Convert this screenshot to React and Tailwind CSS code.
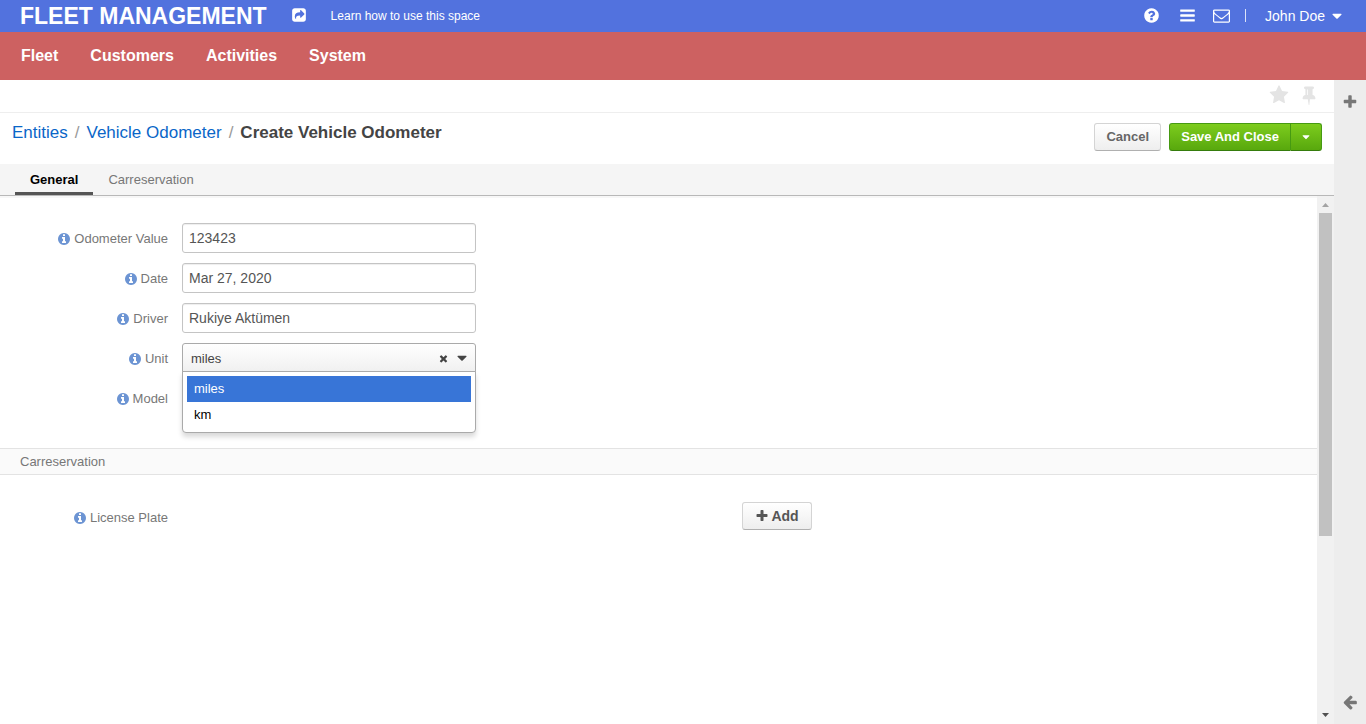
import { useState } from "react";

const ICONS = {
  info: "M1152 1376v-160q0-14-9-23t-23-9h-96v-512q0-14-9-23t-23-9h-320q-14 0-23 9t-9 23v160q0 14 9 23t23 9h96v320h-96q-14 0-23 9t-9 23v160q0 14 9 23t23 9h448q14 0 23-9t9-23zm-128-896v-160q0-14-9-23t-23-9h-192q-14 0-23 9t-9 23v160q0 14 9 23t23 9h192q14 0 23-9t9-23zm640 416q0 209-103 385.5t-279.5 279.5-385.5 103-385.5-103-279.5-279.5-103-385.5 103-385.5 279.5-279.5 385.5-103 385.5 103 279.5 279.5 103 385.5z",
  question:
    "M1024 1376v-192q0-14-9-23t-23-9h-192q-14 0-23 9t-9 23v192q0 14 9 23t23 9h192q14 0 23-9t9-23zm256-672q0-88-55.5-163t-138.5-116-170-41q-243 0-371 213-15 24 8 42l132 100q7 6 19 6 16 0 25-12 53-68 86-92 34-24 86-24 48 0 85.5 26t37.5 59q0 38-20 61t-68 45q-63 28-115.5 86.5t-52.5 125.5v36q0 14 9 23t23 9h192q14 0 23-9t9-23q0-19 21.5-49.5t54.5-49.5q32-18 49-28.5t46-35 44.5-48 28-60.5 12.5-81zm384 192q0 209-103 385.5t-279.5 279.5-385.5 103-385.5-103-279.5-279.5-103-385.5 103-385.5 279.5-279.5 385.5-103 385.5 103 279.5 279.5 103 385.5z",
  bars: "M1664 1344v128q0 26-19 45t-45 19h-1408q-26 0-45-19t-19-45v-128q0-26 19-45t45-19h1408q26 0 45 19t19 45zm0-512v128q0 26-19 45t-45 19h-1408q-26 0-45-19t-19-45v-128q0-26 19-45t45-19h1408q26 0 45 19t19 45zm0-512v128q0 26-19 45t-45 19h-1408q-26 0-45-19t-19-45v-128q0-26 19-45t45-19h1408q26 0 45 19t19 45z",
  envelope:
    "M1664 1504v-768q-32 36-69 66-268 206-426 338-51 43-83 67t-86.5 48.5-102.5 24.5h-2q-48 0-102.5-24.5t-86.5-48.5-83-67q-158-132-426-338-37-30-69-66v768q0 13 9.5 22.5t22.5 9.5h1472q13 0 22.5-9.5t9.5-22.5zm0-1051v-24.5l-.5-13-3-12.5-5.5-9-9-7.5-14-2.5h-1472q-13 0-22.5 9.5t-9.5 22.5q0 168 147 284 193 152 401 317 6 5 35 29.5t46 37.5 44.5 31.5 50.5 27.5 43 9h2q20 0 43-9t50.5-27.5 44.5-31.5 46-37.5 35-29.5q208-165 401-317 54-43 100.5-115.5t46.5-131.5zm128-37v1088q0 66-47 113t-113 47h-1472q-66 0-113-47t-47-113v-1088q0-66 47-113t113-47h1472q66 0 113 47t47 113z",
  share:
    "M416 128h960q119 0 203.500 84.500t84.500 203.500v960q0 119-84.500 203.500t-203.500 84.500h-960q-119 0-203.500-84.500t-84.500-203.500v-960q0-119 84.500-203.500t203.500-84.500zM1024 400v176q-300 0-450 120t-150 360q0 130 92 272q14 22 36 14q22-10 18-36q-30-170 44-248q90-98 410-98v176q0 42 40 58q38 16 70-14l352-352q38-38 0-90l-352-384q-32-30-70-14t-40 60z",
  star: "M1728 647q0 22-26 48l-363 354 86 500q1 7 1 20 0 21-10.500 35.500t-30.500 14.500q-19 0-40-12l-449-236-449 236q-22 12-40 12-21 0-31.500-14.500t-10.500-35.500q0-6 2-20l86-500-364-354q-25-27-25-48 0-37 56-46l502-73 225-455q19-41 49-41t49 41l225 455 502 73q56 9 56 46z",
  pin: "M800 864v-448q0-14-9-23t-23-9-23 9-9 23v448q0 14 9 23t23 9 23-9 9-23zm672 352q0 26-19 45t-45 19h-429l-51 483q-2 12-10.500 20.500t-20.500 8.500h-1q-27 0-32-27l-76-485h-404q-26 0-45-19t-19-45q0-123 78.500-221.500t177.500-98.500v-512q-52 0-90-38t-38-90 38-90 90-38h640q52 0 90 38t38 90-38 90-90 38v512q99 0 177.500 98.500t78.500 221.500z",
  plus: "M1600 736v192q0 40-28 68t-68 28h-416v416q0 40-28 68t-68 28h-192q-40 0-68-28t-28-68v-416h-416q-40 0-68-28t-28-68v-192q0-40 28-68t68-28h416v-416q0-40 28-68t68-28h192q40 0 68 28t28 68v416h416q40 0 68 28t28 68z",
  arrowLeft:
    "M1664 896v128q0 53-32.500 90.500t-84.500 37.500h-704l293 294q38 36 38 90t-38 90l-75 76q-37 37-90 37-52 0-91-37l-651-652q-37-37-37-90 0-52 37-91l651-650q38-38 91-38 52 0 90 38l75 74q38 38 38 91t-38 91l-293 293h704q52 0 84.500 37.500t32.500 90.500z",
  caret:
    "M1408 704q0 26-19 45l-448 448q-19 19-45 19t-45-19l-448-448q-19-19-19-45t19-45 45-19h896q26 0 45 19t19 45z",
  times:
    "M1490 1322q0 40-28 68l-136 136q-28 28-68 28t-68-28l-294-294-294 294q-28 28-68 28t-68-28l-136-136q-28-28-28-68t28-68l294-294-294-294q-28-28-28-68t28-68l136-136q28-28 68-28t68 28l294 294 294-294q28-28 68-28t68 28l136 136q28 28 28 68t-28 68l-294 294 294 294q28 28 28 68z",
};

function Icon({ name, className }) {
  return (
    <svg
      viewBox="0 0 1792 1792"
      fill="currentColor"
      fillRule="evenodd"
      aria-hidden="true"
      className={"shrink-0 overflow-visible " + className}
    >
      <path d={ICONS[name]} />
    </svg>
  );
}

function Field({ label, id, children }) {
  return (
    <div className="flex min-h-[30px] gap-[14px]">
      <label
        htmlFor={id}
        className="flex w-[168px] shrink-0 items-start justify-end gap-[3px] pt-1.5 text-[13px] leading-5 text-[#777]"
      >
        <Icon name="info" className="mt-[3px] size-[14px] text-[#6c94d3]" />
        {label}
      </label>
      {children}
    </div>
  );
}

function TextInput({ id, defaultValue }) {
  return (
    <input
      id={id}
      type="text"
      defaultValue={defaultValue}
      className="h-[30px] w-[294px] rounded-[3px] border border-[#c4c4c4] bg-white px-1.5 text-sm text-[#555] shadow-[inset_0_1px_1px_rgba(0,0,0,0.07)] outline-none"
    />
  );
}

function UnitSelect() {
  const [unit, setUnit] = useState("miles");
  return (
    <div className="relative w-[294px]">
      <select
        id="unit"
        value={unit}
        onChange={(e) => setUnit(e.target.value)}
        className="h-[30px] w-full appearance-none rounded-t-[3px] border border-[#aaa] bg-linear-to-b from-white to-[#f0f0f0] px-2 pt-0.5 text-[13px] text-[#444] outline-none"
      >
        <option value=""></option>
        <option value="miles">miles</option>
        <option value="km">km</option>
      </select>
      <div className="pointer-events-none absolute inset-y-0 right-1.5 flex items-center gap-[5px]">
        <button
          type="button"
          aria-label="Clear"
          onClick={() => setUnit("")}
          className="pointer-events-auto text-[#444]"
        >
          <Icon name="times" className="size-[11px]" />
        </button>
        <Icon name="caret" className="size-4 text-[#444]" />
      </div>
      <ul
        role="listbox"
        aria-label="Unit"
        className="absolute inset-x-0 top-[28px] z-10 rounded-b-[4px] border border-[#aaa] bg-white px-1 py-1 text-[13px] leading-[26px] text-black shadow-[0_4px_5px_rgba(0,0,0,0.15)]"
      >
        {["miles", "km"].map((option) => (
          <li
            key={option}
            role="option"
            aria-selected={option === unit}
            onClick={() => setUnit(option)}
            className={option === unit ? "bg-[#3875d7] px-[7px] text-white" : "px-[7px]"}
          >
            {option}
          </li>
        ))}
      </ul>
    </div>
  );
}

export default function App() {
  return (
    <div className="flex min-h-screen flex-col bg-white font-['Liberation_Sans',Arial,sans-serif] text-[13px] text-[#444]">
      <header>
        <div className="flex h-8 items-center bg-[#5272de] pr-[21px] pl-5 text-white">
          <h1 className="text-[23px] leading-8 font-bold">FLEET MANAGEMENT</h1>
          <button type="button" aria-label="Share" className="ml-6 pb-0.5">
            <Icon name="share" className="size-4" />
          </button>
          <a href="#help" className="ml-6 text-xs">
            Learn how to use this space
          </a>
          <div className="ml-auto flex items-center">
            <button type="button" aria-label="Help" className="pb-0.5">
              <Icon name="question" className="size-[17px]" />
            </button>
            <button type="button" aria-label="Shortcuts" className="ml-[19px] pb-0.5">
              <Icon name="bars" className="size-[17px]" />
            </button>
            <button type="button" aria-label="Mail" className="ml-[17px] pb-0.5">
              <Icon name="envelope" className="size-[17px]" />
            </button>
            <span className="mr-[19px] mb-0.5 ml-[15px] h-[13px] w-px bg-white/80" />
            <button type="button" className="flex items-center gap-1 text-sm">
              John Doe
              <Icon name="caret" className="size-4" />
            </button>
          </div>
        </div>
        <nav className="flex h-12 items-center gap-8 bg-[#cd6161] px-[21px] text-base font-bold text-white">
          <a href="#fleet">Fleet</a>
          <a href="#customers">Customers</a>
          <a href="#activities">Activities</a>
          <a href="#system">System</a>
        </nav>
      </header>

      <div className="flex flex-1">
        <main className="flex min-w-0 flex-1 flex-col">
          <div className="flex h-[33px] items-center justify-end gap-2.5 border-b border-[#eee] pr-[15px] pb-0.5 text-[#e4e4e4]">
            <button type="button" aria-label="Favorite">
              <Icon name="star" className="size-5" />
            </button>
            <button type="button" aria-label="Pin">
              <Icon name="pin" className="size-5" />
            </button>
          </div>

          <div className="flex h-[51px] justify-between px-3">
            <nav aria-label="Breadcrumb" className="flex gap-[7px] pt-2 text-[17px] leading-6">
              <a href="#entities" className="text-[#0a66c8]">
                Entities
              </a>
              <span className="text-[#999]">/</span>
              <a href="#odometer" className="text-[#0a66c8]">
                Vehicle Odometer
              </a>
              <span className="text-[#999]">/</span>
              <h2 className="font-bold">Create Vehicle Odometer</h2>
            </nav>
            <div className="flex gap-2 pt-2.5 font-bold">
              <button
                type="button"
                className="h-7 w-[67px] rounded-[3px] border border-[#d4d4d4] border-b-[#b0b0b0] bg-linear-to-b from-white to-[#eee] text-[#666]"
              >
                Cancel
              </button>
              <div className="flex h-7 text-white [text-shadow:0_1px_1px_rgba(0,0,0,0.4)]">
                <button
                  type="button"
                  className="rounded-l-[3px] border border-[#469a12] border-b-[#357c0c] bg-linear-to-b from-[#7dcc1d] to-[#58a80d] px-[11px]"
                >
                  Save And Close
                </button>
                <button
                  type="button"
                  aria-label="More save options"
                  className="flex w-[31px] items-center justify-center rounded-r-[3px] border border-l-0 border-[#469a12] border-b-[#357c0c] bg-linear-to-b from-[#7dcc1d] to-[#58a80d]"
                >
                  <Icon name="caret" className="size-3" />
                </button>
              </div>
            </div>
          </div>

          <div role="tablist" className="flex h-8 border-b border-[#b8b8b8] bg-[#f5f5f5] px-[15px]">
            <button
              type="button"
              role="tab"
              aria-selected="true"
              className="border-b-3 border-[#555] px-[15px] pt-[3px] font-bold text-black"
            >
              General
            </button>
            <button
              type="button"
              role="tab"
              aria-selected="false"
              className="border-b-3 border-transparent px-[15px] pt-[3px] text-[#777]"
            >
              Carreservation
            </button>
          </div>

          <div className="flex flex-1">
            <form className="min-w-0 flex-1 border-t-2 border-[#f7f7f7]">
              <section className="flex flex-col gap-2.5 pt-[25px] pb-[35px]">
                <Field label="Odometer Value" id="odometer">
                  <TextInput id="odometer" defaultValue="123423" />
                </Field>
                <Field label="Date" id="date">
                  <TextInput id="date" defaultValue="Mar 27, 2020" />
                </Field>
                <Field label="Driver" id="driver">
                  <TextInput id="driver" defaultValue="Rukiye Aktümen" />
                </Field>
                <Field label="Unit" id="unit">
                  <UnitSelect />
                </Field>
                <Field label="Model" id="model">
                  <TextInput id="model" defaultValue="" />
                </Field>
              </section>
              <h3 className="border-y border-[#e3e3e3] bg-[#fafafa] px-5 leading-[25px] text-[#777]">
                Carreservation
              </h3>
              <section className="flex pt-[27px]">
                <Field label="License Plate" id="add-plate">
                  <button
                    id="add-plate"
                    type="button"
                    className="ml-[560px] flex h-7 w-[70px] items-center justify-center gap-0.5 rounded-[3px] border border-[#d4d4d4] border-b-[#b0b0b0] bg-linear-to-b from-white to-[#eee] text-sm font-bold text-[#555]"
                  >
                    <Icon name="plus" className="size-[14px]" />
                    Add
                  </button>
                </Field>
              </section>
            </form>
            <div
              aria-hidden="true"
              className="flex w-[17px] flex-col items-center bg-[#f1f1f1]"
            >
              <svg viewBox="0 0 7 4" className="mt-[7px] h-1 w-[7px]">
                <path d="M0 4L3.500 0L7 4z" fill="#a3a3a3" />
              </svg>
              <div className="mt-1.5 w-[13px] flex-[323] bg-[#c1c1c1]" />
              <div className="flex-[177]" />
              <svg viewBox="0 0 7 4" className="mb-[7px] h-1 w-[7px]">
                <path d="M0 0L3.500 4L7 0z" fill="#505050" />
              </svg>
            </div>
          </div>
        </main>

        <aside className="flex w-8 flex-col items-center justify-between bg-[#ededed] py-[14px] text-[#777]">
          <button type="button" aria-label="Add widget">
            <Icon name="plus" className="size-4" />
          </button>
          <button type="button" aria-label="Expand sidebar">
            <Icon name="arrowLeft" className="size-4" />
          </button>
        </aside>
      </div>
    </div>
  );
}
